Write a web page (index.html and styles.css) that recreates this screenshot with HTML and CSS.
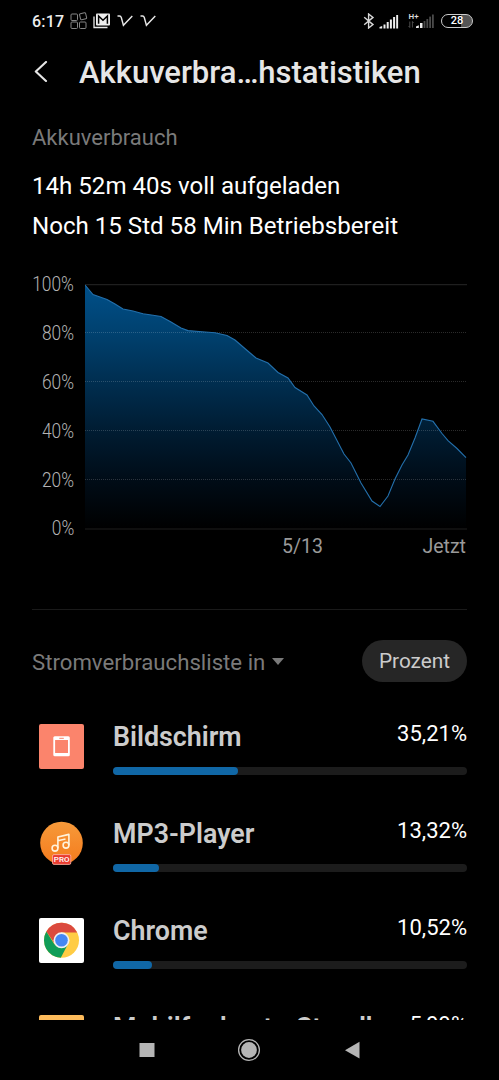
FILE: index.html
```html
<!DOCTYPE html>
<html lang="de">
<head>
    <meta charset="UTF-8">
    <meta name="viewport" content="width=device-width, initial-scale=1.0">
    <title>Akkuverbrauchstatistiken</title>
    <link rel="stylesheet" href="styles.css">
</head>
<body>
<div class="phone">
    <div class="status-bar">
        <span class="clock">6:17</span>
        <svg class="icon-apps" width="18" height="18" viewBox="0 0 18 18" fill="none" stroke="#858585" stroke-width="1">
            <rect x="1" y="2" width="6.5" height="6.5" rx="1"/>
            <rect x="1" y="10" width="6.5" height="6.5" rx="1"/>
            <rect x="9.5" y="10" width="6.5" height="6.5" rx="1"/>
            <rect x="10" y="1.2" width="6.2" height="6.2" rx="1" transform="rotate(-14 13 4.3)"/>
        </svg>
        <svg class="icon-mail" width="18" height="16" viewBox="0 0 18 16">
            <path d="M1 3.5V14.5H14.5" fill="none" stroke="#e8e8e8" stroke-width="1.3"/>
            <rect x="3" y="0.5" width="14" height="12" rx="1" fill="#f0f0f0"/>
            <path d="M5.6 10.7V3L10 7.2L14.4 3V10.7" fill="none" stroke="#000" stroke-width="1.5"/>
        </svg>
        <svg class="icon-check" width="16" height="12" viewBox="0 0 16 12" fill="none" stroke="#e8e8e8" stroke-width="1.4">
            <path d="M0.5 1H2.5Q3.8 1 4.3 2.5L6.4 10.3L15.3 1"/>
        </svg>
        <svg class="icon-check" width="16" height="12" viewBox="0 0 16 12" fill="none" stroke="#e8e8e8" stroke-width="1.4">
            <path d="M0.5 1H2.5Q3.8 1 4.3 2.5L6.4 10.3L15.3 1"/>
        </svg>
        <div class="status-right">
            <svg width="12" height="16" viewBox="0 0 12 16" fill="none" stroke="#d8d8d8" stroke-width="1.4">
                <path d="M1.2 4.2L10 11.6L5.6 15V1L10 4.4L1.2 11.8"/>
            </svg>
            <svg class="icon-signal" width="20" height="15" viewBox="0 0 20 15" fill="#eee">
                <path d="M0.5 14.5V13L3.2 12V14.5Z"/>
                <rect x="4.5" y="10.5" width="2" height="4"/>
                <rect x="7.7" y="8" width="2" height="6.5"/>
                <rect x="10.9" y="5.5" width="2" height="9"/>
                <rect x="14.1" y="3" width="2" height="11.5"/>
                <rect x="17.2" y="1" width="1.9" height="13.5"/>
            </svg>
            <svg class="icon-data" width="27" height="16" viewBox="0 0 27 16">
                <text class="net-type" x="0.5" y="5.8">H+</text>
                <path d="M1.8 8.5V14.5M0.6 13L1.8 14.5M4.4 14.5V8.5L5.6 10" fill="none" stroke="#555" stroke-width="0.9"/>
                <g fill="#eee">
                    <path d="M8 15V13.4L10.8 12.3V15Z"/>
                    <rect x="12" y="10" width="2.5" height="5"/>
                </g>
                <g fill="#4a4a4a">
                    <rect x="15.6" y="8" width="1.8" height="7"/>
                    <rect x="18.4" y="6" width="1.8" height="9"/>
                    <rect x="21.2" y="3.6" width="1.8" height="11.4"/>
                    <rect x="24" y="1.5" width="1.8" height="13.5"/>
                </g>
            </svg>
            <span class="battery">28</span>
        </div>
    </div>

    <div class="title-bar">
        <svg width="14" height="22" viewBox="0 0 14 22" fill="none" stroke="#e6e6e6" stroke-width="2.1" stroke-linecap="round" stroke-linejoin="round">
            <path d="M12 1L1.8 10.5L12 20"/>
        </svg>
        <h1>Akkuverbra…hstatistiken</h1>
    </div>

    <div class="content">
        <div class="summary">
            <h2>Akkuverbrauch</h2>
            <p>14h 52m 40s voll aufgeladen</p>
            <p class="remaining">Noch 15 Std 58 Min Betriebsbereit</p>
        </div>

        <div class="chart">
            <div class="y-axis">
                <span>100%</span>
                <span>80%</span>
                <span>60%</span>
                <span>40%</span>
                <span>20%</span>
                <span>0%</span>
            </div>
            <div class="plot">
                <svg width="382" height="247" viewBox="0 0 382 247">
                    <defs>
                        <linearGradient id="fill" x1="0" y1="0" x2="0" y2="245" gradientUnits="userSpaceOnUse">
                            <stop offset="0" stop-color="#00508a"/>
                            <stop offset="0.2" stop-color="#00416f"/>
                            <stop offset="0.4" stop-color="#002e50"/>
                            <stop offset="0.6" stop-color="#001c32"/>
                            <stop offset="0.8" stop-color="#000c17"/>
                            <stop offset="1" stop-color="#000"/>
                        </linearGradient>
                    </defs>
                    <path fill="url(#fill)" d="M0 1L8 10.5L15 13L22 15.5L30 20L38 25L48 27L58 29.7L68 31.3L76 32.5L86 38L96 44L103 46.6L117 47.7L130 48.7L142 51.5L150 56L161 65.5L171 74L183 79L193 88.5L203 94L210 103.5L222 111L229 122L237 130.5L245 143L259 170L266 179L276 199L287 217L295 222.5L303 212L310 195L317 181L323 171L330 154L337 135L348 137.3L357 149.5L363 156.7L372 164.5L381 173.7V245H0Z"/>
                    <g stroke="#fff" stroke-opacity="0.17" stroke-dasharray="1 1">
                        <path d="M0 48.5H382M0 97.5H382M0 146.5H382M0 195.5H382"/>
                    </g>
                    <path stroke="#1f1f1f" stroke-width="1.2" d="M0 0.6H382M0 245H382"/>
                    <path fill="none" stroke="#2370ac" stroke-width="1.1" d="M0 1L8 10.5L15 13L22 15.5L30 20L38 25L48 27L58 29.7L68 31.3L76 32.5L86 38L96 44L103 46.6L117 47.7L130 48.7L142 51.5L150 56L161 65.5L171 74L183 79L193 88.5L203 94L210 103.5L222 111L229 122L237 130.5L245 143L259 170L266 179L276 199L287 217L295 222.5L303 212L310 195L317 181L323 171L330 154L337 135L348 137.3L357 149.5L363 156.7L372 164.5L381 173.7"/>
                </svg>
                <div class="x-axis">
                    <span>5/13</span>
                    <span>Jetzt</span>
                </div>
            </div>
        </div>

        <div class="list-head">
            <span>Stromverbrauchsliste in</span>
            <i class="caret"></i>
            <button>Prozent</button>
        </div>

        <div class="list">
            <div class="row">
                <svg class="app-icon" width="45" height="45" viewBox="0 0 45 45">
                    <rect width="45" height="45" rx="2" fill="#fb846c"/>
                    <rect x="14.3" y="12.3" width="16.5" height="20" rx="1.5" fill="#fff"/>
                    <rect x="16.1" y="16" width="12.9" height="13" fill="#fb846c"/>
                    <rect x="20.3" y="13.8" width="4.5" height="1" fill="#fb846c"/>
                </svg>
                <div class="usage">
                    <div class="usage-text">
                        <span class="name">Bildschirm</span>
                        <span class="percent">35,21%</span>
                    </div>
                    <div class="bar"><div style="width: 35.21%"></div></div>
                </div>
            </div>
            <div class="row">
                <svg class="app-icon" width="45" height="45" viewBox="0 0 45 45">
                    <defs>
                        <linearGradient id="orange" x1="0" y1="0" x2="0" y2="1">
                            <stop offset="0" stop-color="#f69a3a"/>
                            <stop offset="1" stop-color="#f57b1d"/>
                        </linearGradient>
                    </defs>
                    <circle cx="22.5" cy="22" r="21.3" fill="url(#orange)"/>
                    <g fill="none" stroke="#fff3dc" stroke-width="1.6" stroke-linejoin="round">
                        <circle cx="16" cy="27.2" r="2.9"/>
                        <circle cx="27" cy="24.2" r="2.9"/>
                        <path d="M18.9 27.2V16L29.9 13.4V24.2M18.9 19.8L26.5 18"/>
                    </g>
                    <rect x="13.5" y="33.6" width="18.3" height="9.8" rx="1.5" fill="#ea3b30" stroke="#ffb9a8" stroke-width="0.8"/>
                    <text class="pro" x="22.7" y="41" text-anchor="middle">PRO</text>
                </svg>
                <div class="usage">
                    <div class="usage-text">
                        <span class="name">MP3-Player</span>
                        <span class="percent">13,32%</span>
                    </div>
                    <div class="bar"><div style="width: 13.1%"></div></div>
                </div>
            </div>
            <div class="row">
                <svg class="app-icon" width="45" height="45" viewBox="0 0 45 45">
                    <rect width="45" height="45" rx="2" fill="#fff"/>
                    <circle cx="22.5" cy="22.3" r="17.5" fill="#fc4"/>
                    <path d="M7.34 13.55A17.5 17.5 0 0 1 38.2 14.5H22.5L16 26Z" fill="#db4a3e"/>
                    <path d="M7.34 13.55A17.5 17.5 0 0 0 21.8 39.8L28.9 26.3L22.5 22.3L15.5 26.5Z" fill="#109d58"/>
                    <circle cx="22.5" cy="22.3" r="8" fill="#f1f1f1"/>
                    <circle cx="22.5" cy="22.3" r="6.3" fill="#4587f4"/>
                </svg>
                <div class="usage">
                    <div class="usage-text">
                        <span class="name">Chrome</span>
                        <span class="percent">10,52%</span>
                    </div>
                    <div class="bar"><div style="width: 11%"></div></div>
                </div>
            </div>
            <div class="row">
                <svg class="app-icon" width="45" height="45" viewBox="0 0 45 45">
                    <rect width="45" height="45" rx="2" fill="#fdbb5b"/>
                </svg>
                <div class="usage">
                    <div class="usage-text">
                        <span class="name">Mobilfunknetz-Standby</span>
                        <span class="percent">5,99%</span>
                    </div>
                    <div class="bar"><div style="width: 5.99%"></div></div>
                </div>
            </div>
        </div>
    </div>

    <div class="nav-bar">
        <svg width="24" height="24" viewBox="0 0 24 24"><rect x="4.5" y="5" width="15" height="14" fill="#b5b5b5"/></svg>
        <svg width="24" height="24" viewBox="0 0 24 24">
            <circle cx="12" cy="12" r="10.4" fill="none" stroke="#b5b5b5" stroke-width="1.3"/>
            <circle cx="12" cy="12" r="7.9" fill="#b5b5b5"/>
        </svg>
        <svg width="24" height="24" viewBox="0 0 24 24"><path d="M6 12.2L20.5 3.8V20.6Z" fill="#b5b5b5"/></svg>
    </div>
</div>
</body>
</html>
```
FILE: styles.css
```css
* {
    box-sizing: border-box;
}

body {
    margin: 0;
    background: #000;
    color: #fff;
    font-family: Roboto, "Liberation Sans", sans-serif;
}

h1, h2, p {
    margin: 0;
    font-weight: 400;
    white-space: nowrap;
}

svg {
    display: block;
    flex-shrink: 0;
}

.phone {
    height: 1080px;
    display: flex;
    flex-direction: column;
    overflow: hidden;
}

/* status bar */
.status-bar {
    height: 42px;
    padding: 0 26px 0 32px;
    display: flex;
    align-items: center;
}

.clock {
    width: 38px;
    font-size: 16px;
    font-weight: 500;
    letter-spacing: 0.2px;
    color: #eee;
}

.icon-mail {
    margin: 0 6px 0 5px;
}

.icon-check {
    margin-right: 7px;
}

.status-right {
    display: flex;
    align-items: center;
    margin-left: auto;
}

.icon-signal {
    margin: 0 9px 0 4px;
}

.net-type {
    font-size: 8px;
    font-weight: 600;
    fill: #ddd;
}

.battery {
    width: 32px;
    height: 14px;
    margin-left: 6px;
    border: 1.5px solid #ccc;
    border-radius: 7px;
    background: linear-gradient(90deg, #000 65%, #555 65%);
    font-size: 11px;
    font-weight: 500;
    line-height: 12px;
    text-align: center;
}

/* title */
.title-bar {
    height: 60px;
    padding-left: 34px;
    display: flex;
    align-items: center;
}

.title-bar h1 {
    margin-left: 31px;
    font-size: 31px;
    font-weight: 500;
    color: #e6e6e6;
}

.content {
    flex: 1;
    min-height: 0;
    padding: 0 32px;
    overflow: hidden;
}

.summary h2 {
    padding-top: 16px;
    font-size: 22px;
    line-height: 40px;
    color: #7a7a7a;
}

.summary p {
    margin-top: 8px;
    font-size: 24.1px;
    line-height: 40px;
}

.summary .remaining {
    margin-top: 0;
}

/* battery chart */
.chart {
    display: flex;
    margin-top: 38px;
    height: 326px;
    border-bottom: 1px solid #1a1a1a;
}

.y-axis {
    width: 42px;
    margin-right: 11px;
    padding-top: 1px;
    display: flex;
    flex-direction: column;
    align-items: flex-end;
}

.y-axis span {
    height: 48.9px;
    font-size: 19.5px;
    font-weight: 300;
    line-height: 0;
    color: #b4b4b4;
    transform: scaleX(0.89);
    transform-origin: right;
}

.x-axis {
    display: flex;
    justify-content: space-between;
    padding: 4px 1px 0 197px;
    font-size: 19.5px;
    line-height: 24px;
    color: #9a9a9a;
}

/* usage list */
.list-head {
    display: flex;
    align-items: center;
    height: 103px;
    font-size: 22.2px;
    color: #7a7a7a;
}

.caret {
    margin-left: 7px;
    border: 6px solid transparent;
    border-top: 7px solid #7a7a7a;
    border-bottom: 0;
}

.list-head button {
    width: 105px;
    height: 42px;
    margin: 0 0 1px auto;
    padding: 0;
    border: 0;
    border-radius: 21px;
    background: #262626;
    font: 400 20.8px Roboto, sans-serif;
    color: #ccc;
}

.row {
    display: flex;
    height: 97px;
    padding: 11px 0 0 7px;
}

.usage {
    flex: 1;
    margin-left: 29px;
}

.usage-text {
    display: flex;
    justify-content: space-between;
    white-space: nowrap;
}

.name {
    font-size: 26.8px;
    font-weight: 600;
    line-height: 26px;
    color: #ccc;
}

.percent {
    font-size: 22px;
    line-height: 20px;
}

.bar {
    height: 8px;
    margin-top: 17px;
    border-radius: 4px;
    background: #1c1c1c;
}

.bar div {
    height: 8px;
    border-radius: 4px;
    background: #1067a6;
}

.pro {
    font-size: 8px;
    font-weight: 500;
    fill: #fff;
}

.nav-bar {
    height: 60px;
    padding-right: 1px;
    display: flex;
    justify-content: center;
    align-items: center;
    gap: 78px;
}
```
